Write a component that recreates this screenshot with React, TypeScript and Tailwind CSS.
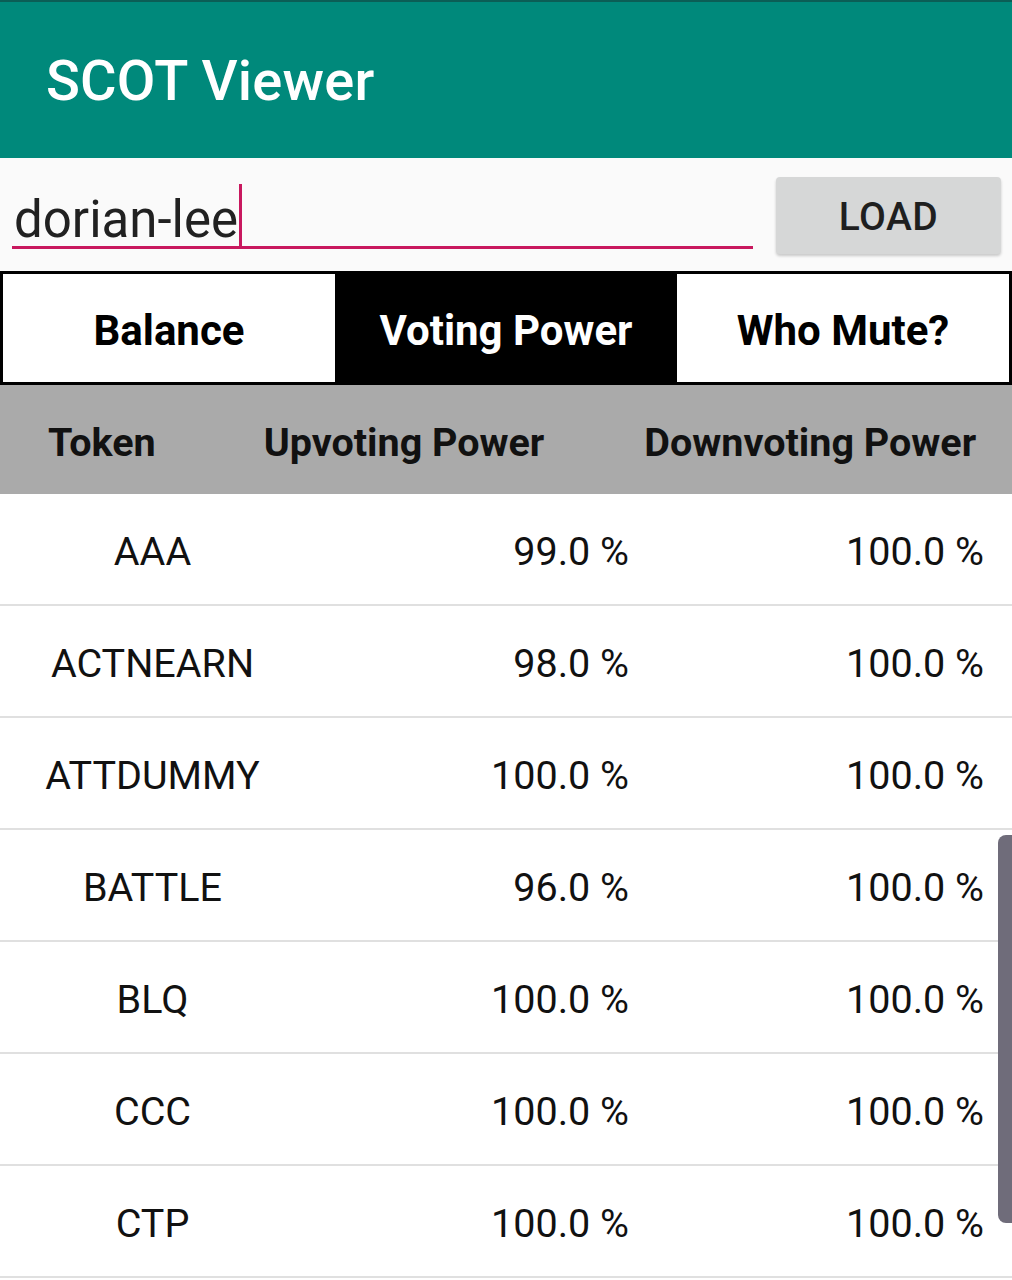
import React from "react";

const rows = [
  ["AAA", "99.0 %", "100.0 %"],
  ["ACTNEARN", "98.0 %", "100.0 %"],
  ["ATTDUMMY", "100.0 %", "100.0 %"],
  ["BATTLE", "96.0 %", "100.0 %"],
  ["BLQ", "100.0 %", "100.0 %"],
  ["CCC", "100.0 %", "100.0 %"],
  ["CTP", "100.0 %", "100.0 %"],
];

export default function App() {
  return (
    <div
      className="relative w-[1012px] h-[1280px] overflow-hidden bg-white"
      style={{ fontFamily: "Roboto, 'Noto Sans', sans-serif" }}
    >
      <div className="h-[2px] bg-[#0b5e56]" />
      <div className="h-[156px] bg-[#00897b] flex items-center pl-[46px]">
        <span className="text-white text-[56px] font-medium leading-none tracking-[0.2px] mt-[2px]">
          SCOT Viewer
        </span>
      </div>
      <div className="h-[113px] bg-[#fafafa] flex items-start">
        <div className="relative ml-[12px] mt-[24px] w-[741px] h-[67px] border-b-[3px] border-[#c8185e]">
          <div className="absolute left-[2px] top-[8px] flex items-center">
            <span className="text-[#212121] text-[51px] leading-none">dorian-lee</span>
            <span className="w-[3px] h-[64px] bg-[#c8185e] ml-[1px] -mt-[6px]" />
          </div>
        </div>
        <div className="ml-[23px] mt-[19px] w-[225px] h-[77px] rounded-[4px] bg-[#d6d7d7] shadow-[0_2px_3px_rgba(0,0,0,0.2)] flex items-center justify-center">
          <span className="text-[#1f1f1f] text-[39px] font-medium tracking-[0.5px] mt-[4px]">LOAD</span>
        </div>
      </div>
      <div className="h-[114px] border-[3px] border-black flex">
        <div className="w-[332px] bg-white flex items-center justify-center text-black text-[42px] font-bold pt-[4px]">
          Balance
        </div>
        <div className="w-[342px] bg-black flex items-center justify-center text-white text-[42px] font-bold pt-[4px]">
          Voting Power
        </div>
        <div className="flex-1 bg-white flex items-center justify-center text-black text-[42px] font-bold pt-[4px]">
          Who Mute?
        </div>
      </div>
      <div className="h-[109px] bg-[#aaaaaa] flex items-center text-[39.5px] font-bold text-[#111] pt-[6px]">
        <span className="ml-[48px]">Token</span>
        <span className="ml-[108px]">Upvoting Power</span>
        <span className="ml-[100px]">Downvoting Power</span>
      </div>
      {rows.map((r) => (
        <div
          key={r[0]}
          className="h-[112px] border-b-[2px] border-[#e0e0e0] flex items-center text-[39.5px] text-[#111] pt-[6px]"
        >
          <div className="w-[305px] text-center">{r[0]}</div>
          <div className="w-[324px] text-right">{r[1]}</div>
          <div className="w-[355px] text-right">{r[2]}</div>
        </div>
      ))}
      <div className="absolute right-0 top-[835px] w-[14px] h-[388px] rounded-l-[8px] bg-[#6f6c7a]" />
    </div>
  );
}
